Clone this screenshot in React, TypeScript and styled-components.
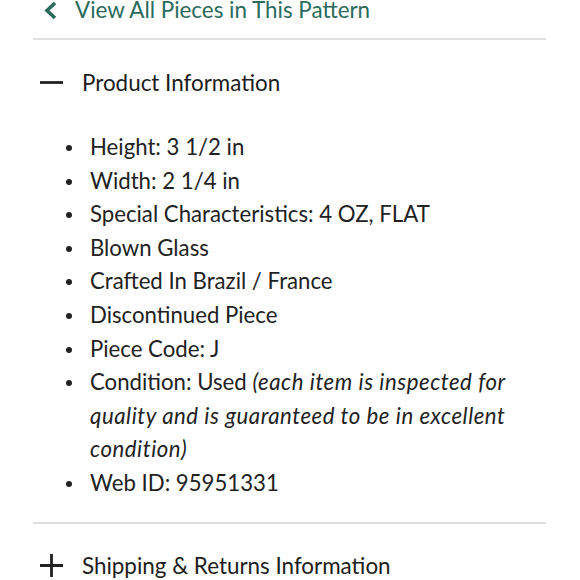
import React from "react";
import styled, { createGlobalStyle } from "styled-components";

const GlobalStyle = createGlobalStyle`
  html, body {
    margin: 0;
    padding: 0;
    background: #fff;
  }
  body {
    font-family: Lato, "Liberation Sans", sans-serif;
    color: #222;
  }
`;

const Page = styled.div`
  width: 513px;
  margin: -6px 0 0 33px;
`;

const BackLink = styled.a`
  display: flex;
  align-items: center;
  gap: 18px;
  padding: 0 0 12px 11px;
  color: #2b6b5c;
  font-size: 22.4px;
  line-height: 32px;
  text-decoration: none;
`;

const Divider = styled.hr`
  border: 0;
  height: 2px;
  background: #e0e0e0;
  margin: 0;
`;

const Section = styled.section`
  display: block;
`;

const SectionHeader = styled.div`
  display: flex;
  align-items: center;
  gap: 19px;
  padding: 0 0 0 7px;
  height: 84px;
  font-size: 22.4px;
  color: #1d1d1d;
`;

const ToggleIcon = styled.svg`
  width: 23px;
  height: 23px;
  flex: none;
`;

const Details = styled.ul`
  margin: 0;
  padding: 6px 0 22px 57px;
  list-style: none;
  font-size: 22.2px;
  line-height: 33.6px;
  color: #222;

  li::before {
    content: "";
    display: inline-block;
    width: 6px;
    height: 6px;
    border-radius: 50%;
    background: #222;
    margin: 0 18px 0 -24px;
    vertical-align: 4px;
  }
`;

const Note = styled.em`
  font-style: italic;
  letter-spacing: 0.55px;
`;

const Chevron = () => (
  <svg width="13" height="19" viewBox="0 0 13 19">
    <path d="M11 2 L3 9.5 L11 17" fill="none" stroke="currentColor" strokeWidth="3.6" />
  </svg>
);

const Minus = () => (
  <ToggleIcon viewBox="0 0 23 23">
    <path d="M0 11.5 H23" stroke="#222" strokeWidth="2.8" />
  </ToggleIcon>
);

const Plus = () => (
  <ToggleIcon viewBox="0 0 23 23">
    <path d="M0 11.5 H23 M11.5 0 V23" stroke="#222" strokeWidth="2.8" />
  </ToggleIcon>
);

const details = [
  "Height: 3 1/2 in",
  "Width: 2 1/4 in",
  "Special Characteristics: 4 OZ, FLAT",
  "Blown Glass",
  "Crafted In Brazil / France",
  "Discontinued Piece",
  "Piece Code: J",
];

const App: React.FC = () => {
  return (
    <>
      <GlobalStyle />
      <Page>
        <BackLink href="#">
          <Chevron />
          View All Pieces in This Pattern
        </BackLink>
        <Divider />
        <Section>
          <SectionHeader>
            <Minus />
            Product Information
          </SectionHeader>
          <Details>
            {details.map((d) => (
              <li key={d}>{d}</li>
            ))}
            <li>
              Condition: Used{" "}
              <Note>
                (each item is inspected for quality and is guaranteed to be in excellent condition)
              </Note>
            </li>
            <li>Web ID: 95951331</li>
          </Details>
        </Section>
        <Divider />
        <Section>
          <SectionHeader>
            <Plus />
            Shipping &amp; Returns Information
          </SectionHeader>
        </Section>
      </Page>
    </>
  );
};

export default App;
